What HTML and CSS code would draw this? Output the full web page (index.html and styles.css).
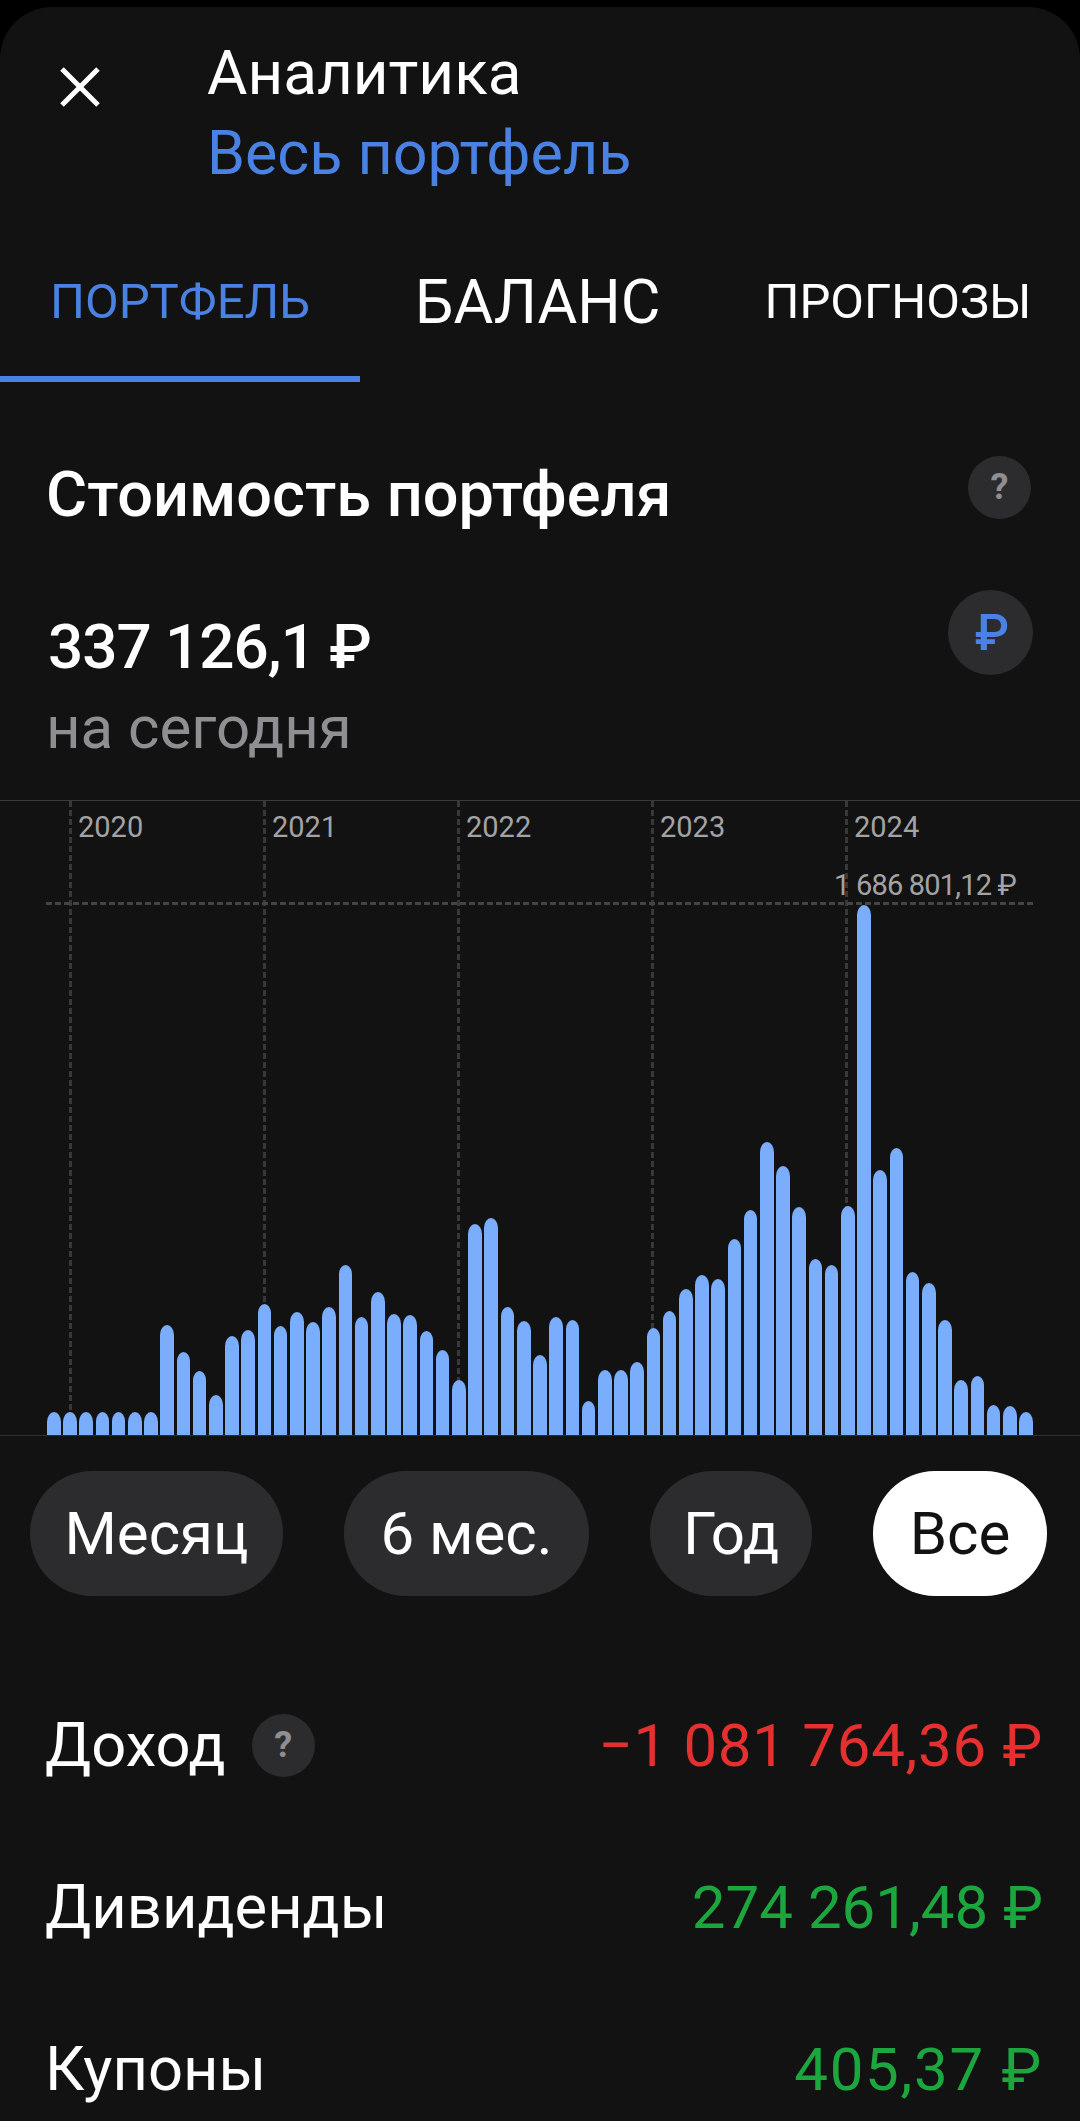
FILE: index.html
```html
<!DOCTYPE html>
<html lang="ru">
<head>
<meta charset="utf-8">
<title>Аналитика</title>
<link rel="stylesheet" href="styles.css">
</head>
<body>
<div class="panel">
  <header class="head">
    <svg class="close" viewBox="0 0 40 40" aria-hidden="true"><path d="M2 2 38 38M38 2 2 38" fill="none" stroke="#fff" stroke-width="5"/></svg>
    <div class="head-text">
      <div class="title">Аналитика</div>
      <div class="subtitle">Весь портфель</div>
    </div>
  </header>
  <nav class="tabs">
    <div class="tab tab-active">ПОРТФЕЛЬ</div>
    <div class="tab tab-big">БАЛАНС</div>
    <div class="tab tab-last">ПРОГНОЗЫ</div>
  </nav>
  <section class="summary">
    <div class="summary-head">
      <h1 class="heading">Стоимость портфеля</h1>
      <span class="help help-top">?</span>
    </div>
    <div class="value-row">
      <div>
        <div class="value">337 126,1 ₽</div>
        <div class="caption">на сегодня</div>
      </div>
      <span class="currency">₽</span>
    </div>
  </section>
  <section class="chart">
    <div class="years">
      <div class="year">2020</div>
      <div class="year">2021</div>
      <div class="year">2022</div>
      <div class="year">2023</div>
      <div class="year">2024</div>
    </div>
    <div class="peak-line"></div>
    <div class="peak-label">1 686 801,12 ₽</div>
    <div class="bars" id="bars"></div>
  </section>
  <div class="periods">
    <div class="pill pill-month">Месяц</div>
    <div class="pill pill-six">6 мес.</div>
    <div class="pill pill-year">Год</div>
    <div class="pill pill-all">Все</div>
  </div>
  <section class="rows">
    <div class="row">
      <div class="row-label">Доход <span class="help help-row">?</span></div>
      <div class="amount negative">−1 081 764,36 ₽</div>
    </div>
    <div class="row">
      <div class="row-label">Дивиденды</div>
      <div class="amount positive">274 261,48 ₽</div>
    </div>
    <div class="row">
      <div class="row-label">Купоны</div>
      <div class="amount positive amount-wide">405,37 ₽</div>
    </div>
  </section>
</div>
<script src="chart.js"></script>
</body>
</html>
```
FILE: styles.css
```css
* { box-sizing: border-box; margin: 0; padding: 0; }
html, body { width: 1080px; height: 2121px; overflow: hidden; background: #000; }
body { font-family: Roboto, "Noto Sans", sans-serif; color: #fff; padding-top: 7px; }
.panel { height: 2114px; background: #121212; border-radius: 52px 52px 0 0; overflow: hidden; }

.head { display: flex; height: 188px; padding: 26px 0 0 60px; }
.close { width: 40px; height: 40px; margin-top: 34px; flex: none; }
.head-text { margin-left: 107px; }
.title { font-size: 62px; line-height: 80px; }
.subtitle { font-size: 61px; line-height: 80px; color: #4a82e4; }

.tabs { display: flex; height: 187px; }
.tab { font-size: 49px; line-height: 112px; padding-top: 51px; }
.tab-active { width: 360px; height: 187px; padding-left: 50px; color: #4a82e4; border-bottom: 6px solid #4a82e4; }
.tab-big { font-size: 61px; margin-left: 55px; }
.tab-last { margin-left: 104px; }

.summary { height: 418px; padding: 71px 47px 0 46px; }
.summary-head { display: flex; justify-content: space-between; align-items: center; height: 84px; }
.heading { font-size: 63px; font-weight: 500; line-height: 84px; }
.help { display: inline-flex; align-items: center; justify-content: center; width: 63px; height: 63px; border-radius: 50%; background: #2c2c2e; color: #8e8e93; font-size: 36px; font-weight: 700; }
.help-top { margin: -16px 2px 0 0; }
.value-row { display: flex; justify-content: space-between; margin-top: 68px; }
.value { font-size: 62px; font-weight: 500; line-height: 83px; letter-spacing: -1px; margin-left: 2px; }
.caption { font-size: 60px; line-height: 80px; color: #8e8e93; }
.currency { display: flex; align-items: center; justify-content: center; width: 85px; height: 85px; margin-top: -15px; padding-left: 3px; border-radius: 50%; background: #2c2c2e; color: #4a82e4; font-size: 50px; font-weight: 500; }

.chart { position: relative; height: 636px; border-top: 1px solid #3a3a3a; border-bottom: 1px solid #2e2e2e; }
.years { position: absolute; inset: 0 0 0 69px; display: flex; }
.year { width: 194px; height: 100%; padding: 9px 0 0 9px; font-size: 29px; line-height: 34px; color: #a3a3a6; background: repeating-linear-gradient(to bottom, #38383a 0 6px, transparent 6px 9px) left top / 3px 100% no-repeat; }
.peak-line { position: absolute; left: 46px; right: 47px; top: 101px; height: 3px; background: repeating-linear-gradient(to right, #444446 0 6px, transparent 6px 9px); }
.peak-label { position: absolute; left: 834px; top: 67px; font-size: 29px; line-height: 34px; letter-spacing: -0.8px; color: #a3a3a6; white-space: nowrap; }
.bars { position: absolute; left: 47px; right: 47px; bottom: 0; height: 540px; display: flex; align-items: flex-end; gap: 2.6px; }
.bar { flex: 1; background: #7aaefc; border-radius: 7px 7px 0 0 / 10px 10px 0 0; }

.periods { display: flex; height: 125px; margin: 35px 0 0 30px; }
.pill { display: flex; align-items: center; justify-content: center; height: 125px; border-radius: 62px; background: #2c2c2e; font-size: 60px; }
.pill-month { width: 253px; }
.pill-six { width: 245px; margin-left: 61px; }
.pill-year { width: 162px; margin-left: 61px; }
.pill-all { width: 174px; margin-left: 61px; background: #fff; color: #121212; }

.rows { padding: 68px 37px 0 45px; }
.row { display: flex; justify-content: space-between; align-items: center; height: 162px; font-size: 60px; }
.row-label { display: flex; align-items: center; font-size: 61.5px; }
.help-row { margin-left: 26px; }
.negative { color: #e5302f; letter-spacing: 0.7px; }
.positive { color: #1ca63e; }
.amount-wide { letter-spacing: 1.7px; }
```
FILE: chart.js
```js
var heights = [23,23,23,23,23,23,23,110,83,64,40,99,105,131,109,123,113,128,170,118,143,121,120,104,85,55,211,217,128,114,80,118,115,34,65,65,73,107,124,146,160,156,196,225,293,269,228,176,170,229,530,265,287,163,152,115,55,59,30,29,23];
var host = document.getElementById('bars');
heights.forEach(function (h) {
  var bar = document.createElement('div');
  bar.className = 'bar';
  bar.style.height = h + 'px';
  host.appendChild(bar);
});
```
